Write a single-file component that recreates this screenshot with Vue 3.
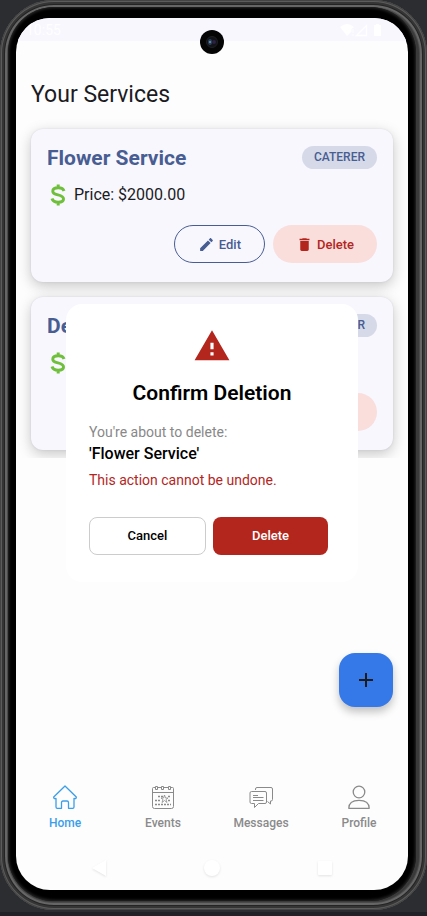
<script setup>
import { ref } from 'vue'

const services = ref([
  { id: 1, name: 'Flower Service', kind: 'CATERER', price: '$2000.00' },
  { id: 2, name: 'Decoration', kind: 'CATERER', price: '$1500.00' },
])
const pending = ref(services.value[0])
const current = ref('Home')
const tabs = ['Home', 'Events', 'Messages', 'Profile']

function close() {
  pending.value = null
}
function remove() {
  services.value = services.value.filter((s) => s !== pending.value)
  close()
}
</script>

<template>
  <div class="desk">
    <div class="phone">
      <div class="bezel">
        <div class="screen">
          <header class="status">
            <span>10:55</span>
            <svg width="44" height="14" viewBox="0 0 44 14" aria-hidden="true">
              <path d="M2 4Q9-2 16 4L13.500 6V8.500L9 13Z" fill="#fff" />
              <path d="M14.500 6h1v4h-1zM14.500 11h1v2h-1z" fill="#fff" />
              <path d="M18.500 12.500L28.500 2.500V12.500Z" fill="none" stroke="#fff" stroke-width="1.300" />
              <path d="M36 2h2V1h3v1h2v11h-7z" fill="#fff" />
            </svg>
          </header>
          <svg class="camera" width="24" height="24" viewBox="0 0 24 24" aria-hidden="true">
            <circle cx="12" cy="12" r="12" fill="#050506" />
            <circle cx="12" cy="12" r="5.500" fill="#121317" stroke="#1e1e23" />
            <ellipse cx="10" cy="12" rx="2" ry="3" fill="#29415c" />
            <circle cx="14" cy="12" r="2" fill="#2b2142" />
            <circle cx="10" cy="12" r="1" fill="#7894ac" />
          </svg>

          <main>
            <h1>Your Services</h1>
            <div class="list">
              <article v-for="s in services" :key="s.id" class="card">
                <div class="card-head">
                  <h2>{{ s.name }}</h2>
                  <span class="kind">{{ s.kind }}</span>
                </div>
                <p class="price">
                  <svg width="24" height="24" viewBox="1 0 24 24" fill="none" stroke="#6fbf3a" stroke-width="3" aria-hidden="true">
                    <path d="M18 8C17.400 6 15.400 4.800 12.200 4.800C9 4.800 6.800 6.200 6.800 8.200C6.800 10.400 8.800 11.200 12 11.900C15.500 12.700 17.500 13.800 17.500 16C17.500 18 15.300 19.200 12.200 19.200C8.800 19.200 6.700 17.900 6 15.500M12.200 1.500V5M12.200 19V22.500" />
                  </svg>
                  <span>Price: {{ s.price }}</span>
                </p>
                <div class="card-actions">
                  <button type="button" class="pill edit">
                    <svg width="17" height="17" viewBox="0 0 24 24" fill="currentColor" aria-hidden="true">
                      <path d="M3 17.250V21h3.750L17.810 9.940l-3.750-3.750L3 17.250zM20.710 7.040c.39-.39.39-1.020 0-1.410l-2.340-2.340c-.39-.39-1.020-.39-1.410 0l-1.830 1.830 3.750 3.750 1.830-1.830z" />
                    </svg>
                    Edit
                  </button>
                  <button type="button" class="pill delete" @click="pending = s">
                    <svg width="17" height="17" viewBox="0 0 24 24" fill="currentColor" aria-hidden="true">
                      <path d="M6 19c0 1.100.9 2 2 2h8c1.100 0 2-.9 2-2V7H6v12zM19 4h-3.500l-1-1h-5l-1 1H5v2h14V4z" />
                    </svg>
                    Delete
                  </button>
                </div>
              </article>
            </div>
          </main>

          <button type="button" class="fab" aria-label="Add service">
            <svg width="14" height="14" viewBox="0 0 14 14" stroke="#1b1b1f" stroke-width="2" aria-hidden="true">
              <path d="M7 0V14M0 7H14" />
            </svg>
          </button>

          <nav class="tabs">
            <a v-for="t in tabs" :key="t" href="#" :class="{ active: t === current }" @click.prevent="current = t">
              <svg width="24" height="24" viewBox="0 0 24 24" fill="none" stroke="currentColor" aria-hidden="true">
                <path v-if="t === 'Home'" stroke-width="1.300" stroke-linejoin="round" d="M12 1L23.300 12Q23.500 14 21 13.500V22Q21 23.300 19.700 23.300H15.500V17.500Q15.500 16 14 16H10Q8.500 16 8.500 17.500V23.300H4.300Q3 23.300 3 22V13.500Q.5 14 .7 12Z" />
                <g v-else-if="t === 'Events'">
                  <path d="M4 2.500H2.500Q1.500 2.500 1.500 3.500V21.500Q1.500 23.500 3.500 23.500H20.500Q22.500 23.500 22.500 21.500V3.500Q22.500 2.500 21.500 2.500H20M7 2.500H10M13 2.500H17M1.500 7.500H22.500" />
                  <path d="M4.500 1.500h2v3h-2zM10.500 1.500h2v3h-2zM17.500 1.500h2v3h-2z" />
                  <path stroke-width="1.500" stroke-dasharray="2 1" d="M7 11.500H12M17 11.500H20M4 15.500H10M17 15.500H20M4 19.500H20" />
                  <path stroke-width=".8" d="M13.500 10L14.500 13H17L15 14.500L16 17.500L13.500 15.500L11 17.500L12 14.500L10 13H12.500Z" />
                </g>
                <g v-else-if="t === 'Messages'" stroke-linejoin="round">
                  <path d="M6.500 5V4Q6.500 2.500 8 2.500H22Q23.500 2.500 23.500 4V14.500Q23.500 16 22 16H21.500V19L18.500 16.500" />
                  <path d="M2.500 6.500H16Q17.500 6.500 17.500 8V17Q17.500 18.500 16 18.500H9.500L5.500 22.500V18.500H2.500Q1 18.500 1 17V8Q1 6.500 2.500 6.500ZM4 10.500H9M4 12.500H14.500M4 15.500H14.500" />
                </g>
                <g v-else stroke-width="1.300">
                  <circle cx="12" cy="7" r="5.800" />
                  <path stroke-linejoin="round" d="M1.800 23.300C1.800 18 5.500 15.300 12 15.300S22.200 18 22.200 23.300Z" />
                </g>
              </svg>
              <span>{{ t }}</span>
            </a>
          </nav>
          <div class="system">
            <svg width="18" height="18" viewBox="0 0 18 18" aria-hidden="true"><path d="M2 9L16 1V17Z" /></svg>
            <svg width="18" height="18" viewBox="0 0 18 18" aria-hidden="true"><circle cx="9" cy="9" r="8" /></svg>
            <svg width="18" height="18" viewBox="0 0 18 18" aria-hidden="true"><rect x="2" y="2" width="14" height="14" rx="1" /></svg>
          </div>

          <div v-if="pending" class="overlay">
            <section class="dialog" role="dialog" aria-modal="true" aria-labelledby="confirm-title">
              <svg class="warn" width="38" height="38" viewBox="0 0 24 24" fill="#b3261e" aria-hidden="true">
                <path d="M1 21h22L12 2 1 21zm12-3h-2v-2h2v2zm0-4h-2v-4h2v4z" />
              </svg>
              <h2 id="confirm-title">Confirm Deletion</h2>
              <p class="about">You're about to delete:</p>
              <p class="name">'{{ pending.name }}'</p>
              <p class="danger">This action cannot be undone.</p>
              <div class="choices">
                <button type="button" class="cancel" @click="close">Cancel</button>
                <button type="button" class="confirm" @click="remove">Delete</button>
              </div>
            </section>
          </div>
        </div>
      </div>
    </div>
  </div>
</template>

<style>
body {
  margin: 0;
  background: #2b2d31;
}
</style>

<style scoped>
* {
  box-sizing: border-box;
}
h1,
h2,
p {
  margin: 0;
}
button {
  font: inherit;
  padding: 0;
  border: 0;
  cursor: pointer;
}
.desk {
  min-height: 100vh;
  padding-bottom: 6px;
  display: flex;
  background: linear-gradient(#2b2d31, #2b2d31) top / 100% calc(100% - 4px) no-repeat, #202126;
  font-family: Roboto, "Liberation Sans", sans-serif;
  color: #1b1b1f;
}
.phone {
  flex: 1;
  display: flex;
  padding: 7px 11px 9px 8px;
  border-radius: 54px;
  background: #3a3a3a;
  box-shadow: inset 0 0 0 1px #444, inset 0 0 0 2px #5c5c5c, inset 0 0 0 4px #353535, inset 0 0 0 5px #242424, inset 0 0 0 7px #666, inset 0 0 0 8px #4a4a4a;
}
.bezel {
  flex: 1;
  display: flex;
  padding: 11px 8px;
  border-radius: 46px;
  background: #000;
  box-shadow: inset 0 0 3px 1px #2a2a2a;
}
.screen {
  position: relative;
  flex: 1;
  min-width: 0;
  display: flex;
  flex-direction: column;
  overflow: hidden;
  border-radius: 34px;
  background: #fdfdfe;
}
.status {
  height: 23px;
  padding: 0 26px 0 10px;
  display: flex;
  align-items: center;
  justify-content: space-between;
  background: #f8f7fe;
  color: #fff;
  font-size: 14px;
}
.camera {
  position: absolute;
  top: 12px;
  left: calc(50% - 12px);
}
h1 {
  padding: 40px 15px 0;
  font-size: 23px;
  line-height: 28px;
  font-weight: 400;
}
.list {
  display: flex;
  flex-direction: column;
  gap: 15px;
  padding: 20px 15px 8px;
  overflow: hidden;
}
.card {
  padding: 17px 16px 19px;
  border-radius: 12px;
  background: #f8f7fe;
  box-shadow: 0 4px 14px rgba(0, 0, 0, 0.22), 0 0 2px rgba(0, 0, 0, 0.1);
}
.card-head {
  display: flex;
  align-items: center;
  justify-content: space-between;
  height: 23px;
}
.card-head h2 {
  color: #485d92;
  font-size: 21px;
  line-height: 24px;
  font-weight: 700;
}
.kind {
  padding: 0 12px;
  border-radius: 12px;
  background: #d6d9e8;
  color: #485d92;
  font-size: 12px;
  line-height: 23px;
  font-weight: 500;
}
.price {
  display: flex;
  align-items: center;
  gap: 3px;
  margin-top: 14px;
  font-size: 16px;
  line-height: 24px;
}
.card-actions {
  display: flex;
  justify-content: flex-end;
  gap: 8px;
  margin-top: 18px;
}
.pill {
  display: flex;
  align-items: center;
  gap: 4px;
  height: 38px;
  padding: 0 23px;
  border-radius: 19px;
  font-size: 13px;
  font-weight: 500;
}
.edit {
  border: 1px solid #485d92;
  background: transparent;
  color: #485d92;
}
.delete {
  background: #f9dedc;
  color: #b3261e;
}
.fab {
  position: absolute;
  right: 15px;
  bottom: 183px;
  width: 54px;
  height: 54px;
  display: grid;
  place-items: center;
  border-radius: 16px;
  background: #3579e9;
  box-shadow: 0 5px 9px rgba(0, 0, 0, 0.24);
}
.tabs {
  display: grid;
  grid-template-columns: repeat(4, 1fr);
  margin-top: auto;
}
.tabs a {
  display: flex;
  flex-direction: column;
  align-items: center;
  gap: 6px;
  color: #8a8a8a;
  font-size: 12px;
  line-height: 16px;
  font-weight: 500;
  text-decoration: none;
}
.tabs .active {
  color: #3b9ee8;
}
.system {
  display: flex;
  justify-content: space-around;
  padding: 28px 26px 13px;
}
.system svg {
  fill: #fff;
  filter: drop-shadow(0 1px 1px rgba(0, 0, 0, 0.1));
}
.overlay {
  position: absolute;
  inset: 0 0 22px;
  display: grid;
  place-items: center;
  padding: 0 50px;
}
.dialog {
  width: 100%;
  padding: 23px 23px 27px;
  border-radius: 16px;
  background: #fff;
  font-size: 14px;
  line-height: 20px;
}
.warn {
  display: block;
  margin: 0 auto;
}
.dialog h2 {
  margin-top: 14px;
  color: #000;
  font-size: 21px;
  line-height: 28px;
  font-weight: 600;
  text-align: center;
}
.about {
  margin-top: 15px;
  color: #888;
}
.name {
  margin-top: 2px;
  color: #000;
  font-size: 16px;
  font-weight: 500;
}
.danger {
  margin-top: 6px;
  color: #b3261e;
}
.choices {
  display: flex;
  gap: 7px;
  margin: 27px 7px 0 0;
}
.choices button {
  flex: 1;
  height: 38px;
  border-radius: 8px;
  font-size: 13px;
  font-weight: 500;
}
.cancel {
  border: 1px solid #ccc;
  background: #fff;
  color: #000;
}
.confirm {
  background: #b3261e;
  color: #fff;
}
</style>
